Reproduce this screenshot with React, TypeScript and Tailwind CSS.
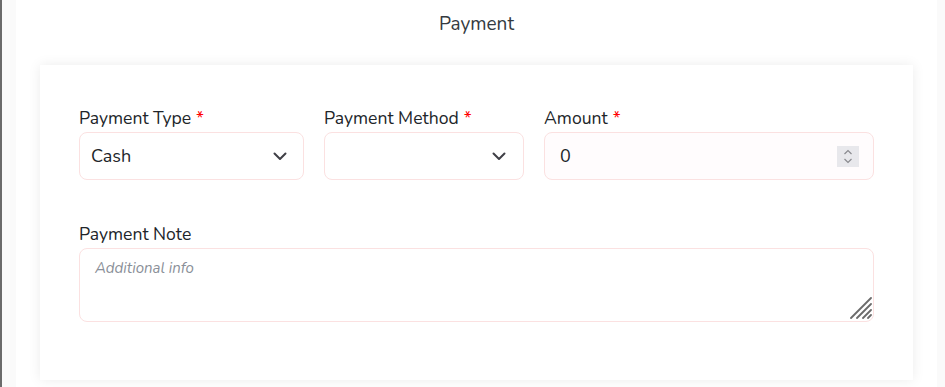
import React from "react";

const font = { fontFamily: '"Nunito", "Open Sans", "Noto Sans", sans-serif' };

function Chevron() {
  return (
    <svg width="16" height="16" viewBox="0 0 16 16" className="shrink-0">
      <path d="M2.5 5.5 L8 11 L13.5 5.5" fill="none" stroke="#3f3f46" strokeWidth="2" strokeLinecap="round" strokeLinejoin="round" />
    </svg>
  );
}

function Label({ text, req }: { text: string; req?: boolean }) {
  return (
    <div className="text-[17.6px] leading-[28px] text-[#212529]">
      {text}
      {req && <span className="text-[#ff0000] ml-[5px]">*</span>}
    </div>
  );
}

export default function App() {
  return (
    <div className="w-[945px] h-[387px] overflow-hidden flex bg-[#fafafa] border-l-2 border-[#6b6b6b]" style={font}>
      <div className="ml-[14px] w-[921px] bg-white flex flex-col">
        <div className="h-[48px] flex items-center justify-center text-[19px] text-[#343a40]">Payment</div>
        <div className="mx-[24px] mt-[17px] h-[315px] bg-white shadow-[0_0_12px_rgba(0,0,0,0.08)] px-[39px] pt-[39px]">
          <div className="grid grid-cols-[225px_200px_330px] gap-x-[20px]">
            <div>
              <Label text="Payment Type" req />
              <div className="h-[48px] rounded-[8px] border border-[#fbe1e1] bg-white flex items-center justify-between pl-[11px] pr-[15px] text-[18px] text-[#212529]">
                <span>Cash</span>
                <Chevron />
              </div>
            </div>
            <div>
              <Label text="Payment Method" req />
              <div className="h-[48px] rounded-[8px] border border-[#fbe1e1] bg-white flex items-center justify-end pr-[16px]">
                <Chevron />
              </div>
            </div>
            <div>
              <Label text="Amount" req />
              <div className="h-[48px] rounded-[8px] border border-[#fbe1e1] bg-[#fffcfd] flex items-center justify-between pl-[15px] pr-[14px] text-[18px] text-[#212529]">
                <span>0</span>
                <div className="w-[22px] h-[21px] bg-[#e8e8ec] flex flex-col items-center justify-center gap-[3px]">
                  <svg width="10" height="6" viewBox="0 0 10 6">
                    <path d="M1.5 5 L5 1.5 L8.5 5" fill="none" stroke="#8a8a8f" strokeWidth="1.2" />
                  </svg>
                  <svg width="10" height="6" viewBox="0 0 10 6">
                    <path d="M1.5 1 L5 4.5 L8.5 1" fill="none" stroke="#8a8a8f" strokeWidth="1.2" />
                  </svg>
                </div>
              </div>
            </div>
          </div>
          <div className="mt-[40px]">
            <Label text="Payment Note" />
            <div className="relative w-[795px] h-[74px]">
              <textarea
                placeholder="Additional info"
                className="block w-full h-full resize-none rounded-[8px] border border-[#fbe1e1] bg-white px-[15px] py-[8px] text-[15px] outline-none placeholder:italic placeholder:text-[#8a8f98]"
                style={font}
              />
              <svg width="22" height="22" viewBox="0 0 22 22" className="absolute right-[2px] bottom-[3px] pointer-events-none">
                <path d="M1 21 L21 1 M7 21 L21 7 M13 21 L21 13 M18 21 L21 18" stroke="#6b6b6b" strokeWidth="1.8" strokeLinecap="round" />
              </svg>
            </div>
          </div>
        </div>
      </div>
    </div>
  );
}
